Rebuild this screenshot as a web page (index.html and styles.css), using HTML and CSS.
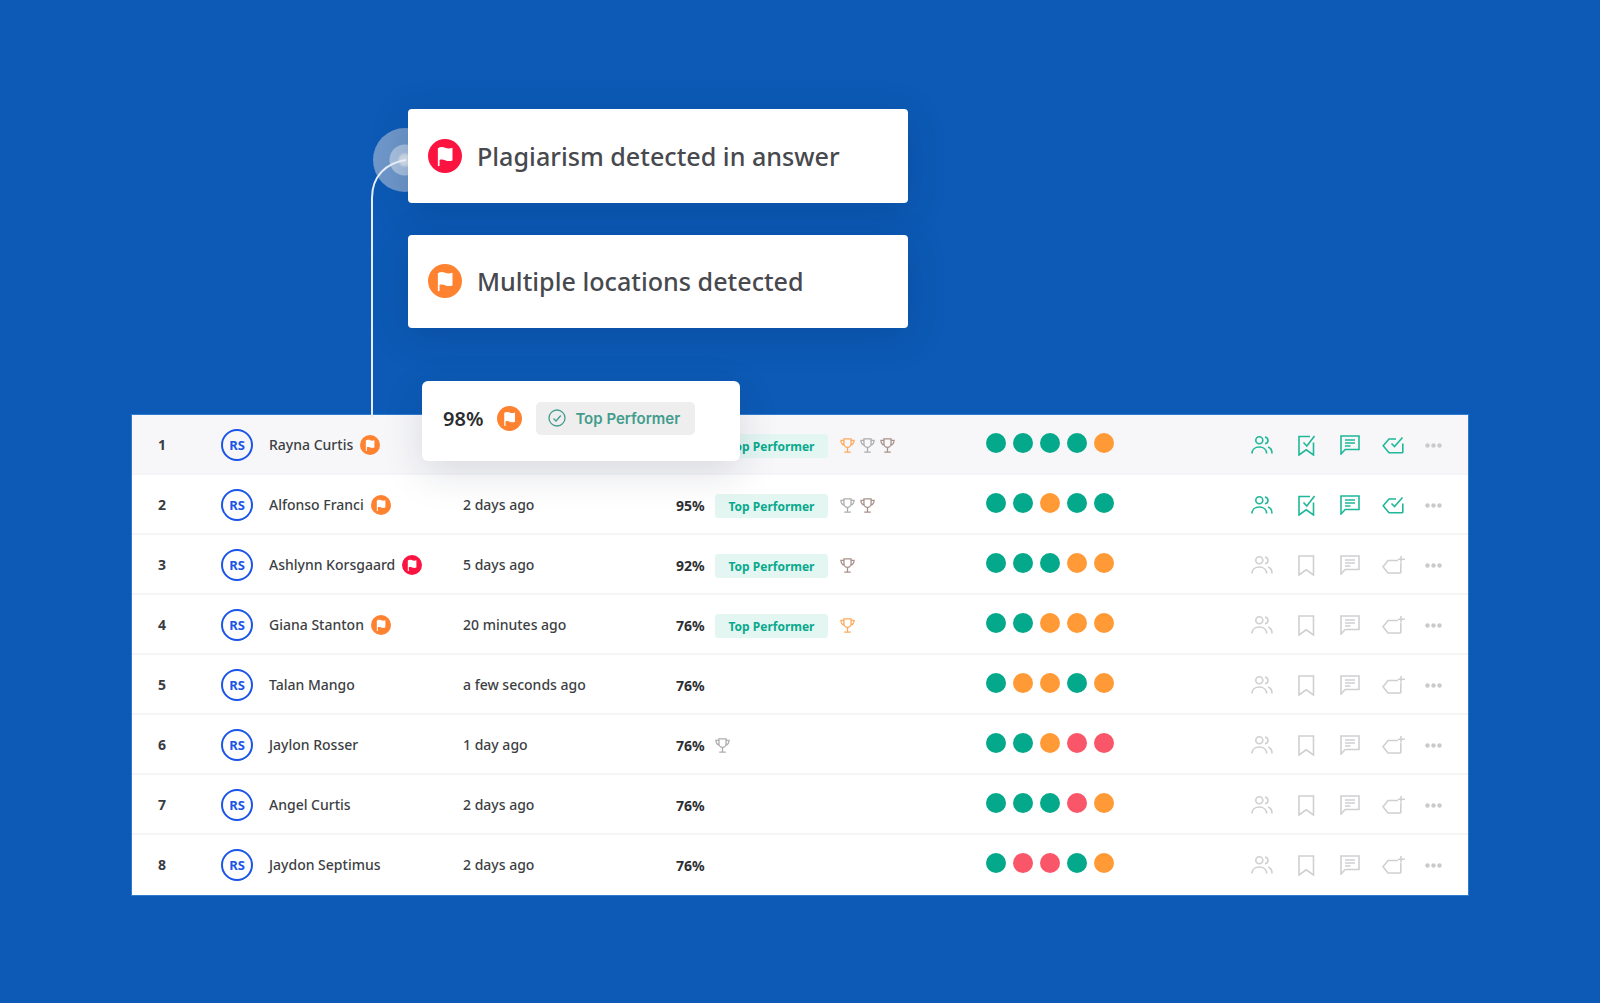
FILE: index.html
```html
<!DOCTYPE html>
<html>
<head>
  <title>Candidates</title>
  <link rel="stylesheet" href="styles.css">
</head>
<body>
  <svg class="defs" width="0" height="0">
    <symbol id="flag" viewBox="0 0 20 20"><circle cx="10" cy="10" r="10" fill="currentColor"/><path d="M5.800 15.800V5.400c1.500-.9 3-.8 4.300-.2s2.700.6 4.300 0v7.400c-1.600.6-3 .5-4.300-.1s-2.400-.6-3.300-.2v3.500c0 .3-1 .3-1 0z" fill="#fff"/></symbol>
    <symbol id="users" viewBox="0 0 22 18"><circle cx="8.300" cy="4.300" r="3.500"/><path d="M1 17.500c0-4 3-6.500 7.300-6.500s7.300 2.500 7.300 6.500M14 1c2 .5 3 1.800 3 3.400s-1 2.900-3 3.400M17 11c2.400.8 4 3 4 6.500"/></symbol>
    <symbol id="mark" viewBox="0 0 17 21"><path d="M1 1h14.500v19L8.200 14.800 1 20z"/></symbol>
    <symbol id="mark-ok" viewBox="0 0 17 21"><path d="M12 1.500H1V20l7.200-5.200 7.300 5.200V7.500M5.500 7.500l3.300 3.500L16.500 1"/></symbol>
    <symbol id="note" viewBox="0 0 20 20"><path d="M1 1h18v13.500H5.200L1 19zM5 5h10M5 8h10M5 11h5.500"/></symbol>
    <symbol id="tag" viewBox="0 0 23 19"><path d="M16 4.500H6L1 10.800l5 6.200h12c.5 0 .8-.3.8-.8V7M19 0v6.500M16 3.200h7"/></symbol>
    <symbol id="tag-ok" viewBox="0 0 23 19"><path d="M14 3H7L1.200 9.800 7 16.800h13c.5 0 .8-.3.8-.8V7.500M9.500 7.500l3 3L20.500 1.500"/></symbol>
    <symbol id="cup" viewBox="0 0 16 16"><path d="M4.200 1h7.600v5.200a3.800 3.800 0 0 1-7.600 0zM4.200 2.500H1c0 3 1.200 4.800 3.900 5.300M11.800 2.500H15c0 3-1.200 4.800-3.900 5.300M8 10v4.500M4.500 15h7"/></symbol>
    <symbol id="more" viewBox="0 0 17 5"><circle cx="2.500" cy="2.500" r="2.200"/><circle cx="8.500" cy="2.500" r="2.200"/><circle cx="14.500" cy="2.500" r="2.200"/></symbol>
  </svg>

  <div class="stage">
    <!-- pulse and connector sit behind the first card -->
    <div class="pulse"></div>
    <svg class="wire" width="60" height="270" viewBox="0 0 60 270"><path d="M2 267V48C2 26 16 13 36 10"/></svg>

    <div class="notices">
      <div class="notice notice-first">
        <svg class="notice-flag red"><use href="#flag"/></svg>
        <span>Plagiarism detected in answer</span>
      </div>
      <div class="notice">
        <svg class="notice-flag orange"><use href="#flag"/></svg>
        <span>Multiple locations detected</span>
      </div>
    </div>

    <div class="popover">
      <b class="pop-score">98%</b>
      <svg class="pop-flag orange"><use href="#flag"/></svg>
      <div class="pop-chip">
        <svg class="pop-check" viewBox="0 0 18 18"><circle cx="9" cy="9" r="8"/><path d="M5.500 9.500l2.500 2.500 4.800-5.500"/></svg>
        Top Performer
      </div>
    </div>

    <div class="table">
      <div class="row row-active">
        <div class="num">1</div><div class="avatar">RS</div>
        <div class="name">Rayna Curtis <svg class="flag orange"><use href="#flag"/></svg></div>
        <div class="when">2 days ago</div><div class="pct">98%</div>
        <div class="tags"><span class="badge">Top Performer</span><svg class="cup gold"><use href="#cup"/></svg><svg class="cup silver"><use href="#cup"/></svg><svg class="cup bronze"><use href="#cup"/></svg></div>
        <div class="dots"><i class="g"></i><i class="g"></i><i class="g"></i><i class="g"></i><i class="o"></i></div>
        <div class="actions on"><svg class="i-users"><use href="#users"/></svg><svg class="i-mark"><use href="#mark-ok"/></svg><svg class="i-note"><use href="#note"/></svg><svg class="i-tag"><use href="#tag-ok"/></svg><svg class="i-more"><use href="#more"/></svg></div>
      </div>
      <div class="row">
        <div class="num">2</div><div class="avatar">RS</div>
        <div class="name">Alfonso Franci <svg class="flag orange"><use href="#flag"/></svg></div>
        <div class="when">2 days ago</div><div class="pct">95%</div>
        <div class="tags"><span class="badge">Top Performer</span><svg class="cup silver"><use href="#cup"/></svg><svg class="cup bronze"><use href="#cup"/></svg></div>
        <div class="dots"><i class="g"></i><i class="g"></i><i class="o"></i><i class="g"></i><i class="g"></i></div>
        <div class="actions on"><svg class="i-users"><use href="#users"/></svg><svg class="i-mark"><use href="#mark-ok"/></svg><svg class="i-note"><use href="#note"/></svg><svg class="i-tag"><use href="#tag-ok"/></svg><svg class="i-more"><use href="#more"/></svg></div>
      </div>
      <div class="row">
        <div class="num">3</div><div class="avatar">RS</div>
        <div class="name">Ashlynn Korsgaard <svg class="flag red"><use href="#flag"/></svg></div>
        <div class="when">5 days ago</div><div class="pct">92%</div>
        <div class="tags"><span class="badge">Top Performer</span><svg class="cup bronze"><use href="#cup"/></svg></div>
        <div class="dots"><i class="g"></i><i class="g"></i><i class="g"></i><i class="o"></i><i class="o"></i></div>
        <div class="actions"><svg class="i-users"><use href="#users"/></svg><svg class="i-mark"><use href="#mark"/></svg><svg class="i-note"><use href="#note"/></svg><svg class="i-tag"><use href="#tag"/></svg><svg class="i-more"><use href="#more"/></svg></div>
      </div>
      <div class="row">
        <div class="num">4</div><div class="avatar">RS</div>
        <div class="name">Giana Stanton <svg class="flag orange"><use href="#flag"/></svg></div>
        <div class="when">20 minutes ago</div><div class="pct">76%</div>
        <div class="tags"><span class="badge">Top Performer</span><svg class="cup gold"><use href="#cup"/></svg></div>
        <div class="dots"><i class="g"></i><i class="g"></i><i class="o"></i><i class="o"></i><i class="o"></i></div>
        <div class="actions"><svg class="i-users"><use href="#users"/></svg><svg class="i-mark"><use href="#mark"/></svg><svg class="i-note"><use href="#note"/></svg><svg class="i-tag"><use href="#tag"/></svg><svg class="i-more"><use href="#more"/></svg></div>
      </div>
      <div class="row">
        <div class="num">5</div><div class="avatar">RS</div>
        <div class="name">Talan Mango</div>
        <div class="when">a few seconds ago</div><div class="pct">76%</div>
        <div class="tags"></div>
        <div class="dots"><i class="g"></i><i class="o"></i><i class="o"></i><i class="g"></i><i class="o"></i></div>
        <div class="actions"><svg class="i-users"><use href="#users"/></svg><svg class="i-mark"><use href="#mark"/></svg><svg class="i-note"><use href="#note"/></svg><svg class="i-tag"><use href="#tag"/></svg><svg class="i-more"><use href="#more"/></svg></div>
      </div>
      <div class="row">
        <div class="num">6</div><div class="avatar">RS</div>
        <div class="name">Jaylon Rosser</div>
        <div class="when">1 day ago</div><div class="pct">76%</div>
        <div class="tags"><svg class="cup silver"><use href="#cup"/></svg></div>
        <div class="dots"><i class="g"></i><i class="g"></i><i class="o"></i><i class="r"></i><i class="r"></i></div>
        <div class="actions"><svg class="i-users"><use href="#users"/></svg><svg class="i-mark"><use href="#mark"/></svg><svg class="i-note"><use href="#note"/></svg><svg class="i-tag"><use href="#tag"/></svg><svg class="i-more"><use href="#more"/></svg></div>
      </div>
      <div class="row">
        <div class="num">7</div><div class="avatar">RS</div>
        <div class="name">Angel Curtis</div>
        <div class="when">2 days ago</div><div class="pct">76%</div>
        <div class="tags"></div>
        <div class="dots"><i class="g"></i><i class="g"></i><i class="g"></i><i class="r"></i><i class="o"></i></div>
        <div class="actions"><svg class="i-users"><use href="#users"/></svg><svg class="i-mark"><use href="#mark"/></svg><svg class="i-note"><use href="#note"/></svg><svg class="i-tag"><use href="#tag"/></svg><svg class="i-more"><use href="#more"/></svg></div>
      </div>
      <div class="row">
        <div class="num">8</div><div class="avatar">RS</div>
        <div class="name">Jaydon Septimus</div>
        <div class="when">2 days ago</div><div class="pct">76%</div>
        <div class="tags"></div>
        <div class="dots"><i class="g"></i><i class="r"></i><i class="r"></i><i class="g"></i><i class="o"></i></div>
        <div class="actions"><svg class="i-users"><use href="#users"/></svg><svg class="i-mark"><use href="#mark"/></svg><svg class="i-note"><use href="#note"/></svg><svg class="i-tag"><use href="#tag"/></svg><svg class="i-more"><use href="#more"/></svg></div>
      </div>
    </div>
  </div>
</body>
</html>
```

FILE: styles.css
```css
html, body { margin: 0; height: 100%; }
body { background: #0c5ab5; font-family: "Noto Sans", "Open Sans", Arial, sans-serif; color: #3d3f43; overflow: hidden; }
.defs { position: absolute; }
.stage { position: relative; height: 1003px; padding: 109px 131px 0; box-sizing: border-box; }

.red { color: #fb1440; }
.orange { color: #ff8230; }

/* pulse + connector */
.pulse { position: absolute; left: 373px; top: 128px; width: 64px; height: 64px; border-radius: 50%; background: radial-gradient(circle, #e4e9ee 0, #d5dfe9 5px, #a9c1dd 8px, #a9c1dd 15px, #6f97c9 16px, #6f97c9 32px); }
.wire { position: absolute; left: 370px; top: 150px; z-index: 3; }
.wire path { fill: none; stroke: #e6edf6; stroke-width: 2; }

/* top cards */
.notices { position: relative; z-index: 2; margin-left: 277px; width: 500px; display: flex; flex-direction: column; gap: 32px; }
.notice { height: 93px; background: #fff; border-radius: 4px; display: flex; align-items: center; padding: 0 0 1px 20px; box-sizing: border-box; gap: 15px; font-size: 25.150px; font-weight: 500; color: #47494e; box-shadow: 0 8px 36px rgba(3,40,100,.22); }
.notice-first { height: 94px; }
.notice-flag { width: 34px; height: 34px; flex: none; }

/* hovering score card */
.popover { position: absolute; z-index: 4; left: 422px; top: 381px; width: 318px; height: 80px; background: #fff; border-radius: 6px; box-shadow: 0 12px 40px rgba(20,30,60,.13); display: flex; align-items: center; padding: 0 0 6px 21px; box-sizing: border-box; }
.pop-score { font-size: 20px; font-weight: 600; color: #2a2c30; }
.pop-flag { width: 25px; height: 25px; margin: 0 14px; }
.pop-chip { width: 159px; height: 33px; background: #eeeeef; border-radius: 5px; display: flex; align-items: center; padding-left: 12px; box-sizing: border-box; gap: 9px; font-family: Inter, "Open Sans", sans-serif; font-size: 15px; font-weight: 600; color: #429c8c; }
.pop-check { width: 18px; height: 18px; fill: none; stroke: #429c8c; stroke-width: 1.300; }

/* table */
.table { position: absolute; left: 131px; top: 414px; width: 1338px; background: #fff; border: 1px solid #2f7ccf; box-sizing: border-box; }
.row { height: 60px; box-sizing: border-box; display: grid; grid-template-columns: 63px 48px 194px 213px 39px 271px 265px auto; align-items: center; padding: 2px 0 0 26px; border-bottom: 2px solid #f4f5f7; font-size: 14px; }
.row:last-child { border-bottom-color: transparent; }
.row-active { background: #f7f7f9; }
.num { font-weight: 700; font-size: 14px; color: #3a3c40; margin-top: -2px; }
.avatar { width: 32px; height: 32px; box-sizing: border-box; border: 2px solid #1a55e8; border-radius: 50%; color: #1a55e8; font-weight: 700; font-size: 13px; display: flex; align-items: center; justify-content: center; }
.name { display: flex; align-items: center; gap: 7px; font-weight: 500; white-space: nowrap; margin-top: -2px; }
.flag { width: 20px; height: 20px; flex: none; margin-top: 2px; }
.when { font-weight: 500; white-space: nowrap; margin-top: -2px; }
.pct { font-weight: 700; color: #2d2f33; }
.tags { display: flex; align-items: center; gap: 5px; padding-top: 2px; }
.badge { width: 113px; height: 24px; margin-right: 7px; background: #e3f6f2; border-radius: 3px; color: #08a98c; font-size: 12px; font-weight: 700; display: flex; align-items: center; justify-content: center; white-space: nowrap; }
.cup { width: 15px; height: 15px; fill: none; stroke-width: 1.400; margin-top: -2px; }
.gold { stroke: #fbaa5e; }
.silver { stroke: #adadad; }
.bronze { stroke: #a8918b; }

.dots { display: flex; gap: 7px; margin-top: -4px; }
.dots i { width: 20px; height: 20px; border-radius: 50%; }
.dots .g { background: #04a98b; }
.dots .o { background: #ff9a36; }
.dots .r { background: #f9566a; }

.actions { display: flex; align-items: center; color: #cfd0d2; }
.actions svg { fill: none; stroke: currentColor; stroke-width: 1.600; flex: none; }
.actions.on { color: #1fb899; }
.i-users { width: 22px; height: 18px; margin-right: 25px; }
.i-mark { width: 17px; height: 21px; margin-right: 25px; }
.i-note { width: 20px; height: 20px; margin-right: 22px; }
.i-tag { width: 23px; height: 19px; margin-right: 20px; }
.actions .i-more { width: 17px; height: 5px; fill: #c9cacc; stroke: none; }
```
